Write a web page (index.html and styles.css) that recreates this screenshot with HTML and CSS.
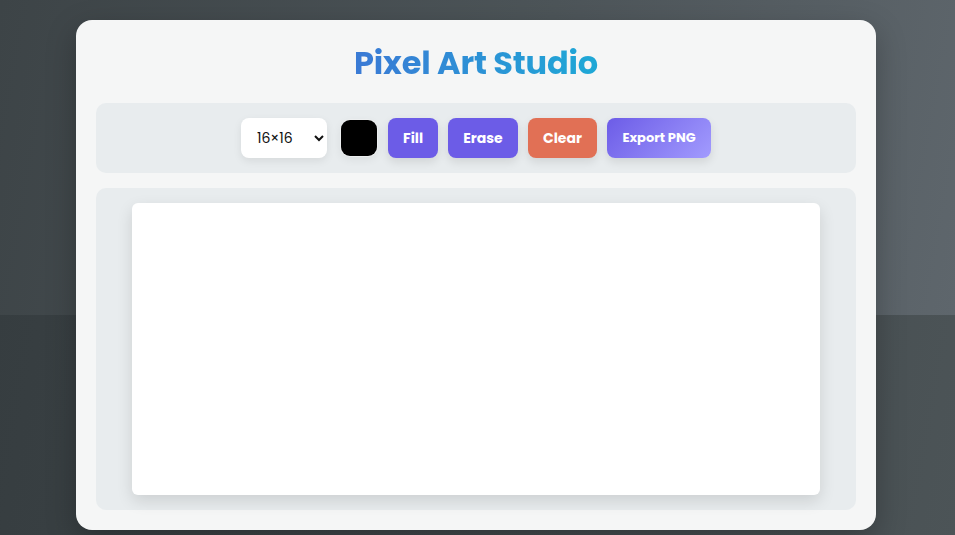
FILE: index.html
```html
<!DOCTYPE html>
<html lang="en">
<head>
<meta charset="utf-8">
<title>Pixel Art Studio</title>
<link rel="stylesheet" href="styles.css">
</head>
<body>
<main class="card">
  <h1 class="title">Pixel Art Studio</h1>
  <div class="toolbar">
    <select class="size-select">
      <option>16×16</option>
      <option>32×32</option>
      <option>64×64</option>
    </select>
    <input class="color-input" type="color" value="#000000">
    <button class="btn btn-fill">Fill</button>
    <button class="btn btn-erase">Erase</button>
    <button class="btn btn-clear">Clear</button>
    <button class="btn btn-export">Export PNG</button>
  </div>
  <div class="canvas-wrap">
    <div class="canvas"></div>
  </div>
</main>
</body>
</html>
```
FILE: styles.css
```css
html {
  background:
    linear-gradient(100deg, #3d4447 0%, #4d5559 55%, #5e666c 100%) top left / 100% 315px no-repeat,
    linear-gradient(100deg, #353c3f 0%, #41484b 55%, #4c5457 100%);
  min-height: 100%;
}
body {
  margin: 0;
  padding: 20px 3px 20px 0;
  font-family: "Poppins", "Open Sans", "Noto Sans", sans-serif;
}
.card {
  width: 800px;
  height: 510px;
  box-sizing: border-box;
  margin: 0 auto;
  padding: 20px;
  background: #f5f6f6;
  border-radius: 16px;
  box-shadow: 0 10px 30px rgba(0, 0, 0, 0.25);
  display: flex;
  flex-direction: column;
}
.title {
  margin: 0 0 20px;
  height: 43px;
  line-height: 45px;
  text-align: center;
  font-size: 32px;
  font-weight: 700;
  letter-spacing: -0.2px;
  background: linear-gradient(90deg, #3a7bd5 35%, #1fa7d6 65%);
  -webkit-background-clip: text;
  background-clip: text;
  color: transparent;
}
.toolbar {
  height: 70px;
  box-sizing: border-box;
  background: #e8ecee;
  border-radius: 10px;
  display: flex;
  align-items: center;
  justify-content: center;
  gap: 10px;
  margin-bottom: 15px;
}
.size-select {
  width: 86px;
  height: 40px;
  padding: 0 6px 0 12px;
  border: none;
  border-radius: 8px;
  background: #ffffff;
  font-family: "Poppins", sans-serif;
  font-size: 14px;
  color: #111;
  box-shadow: 0 3px 8px rgba(0, 0, 0, 0.08);
  margin-right: 3px;
}
.color-input {
  -webkit-appearance: none;
  appearance: none;
  width: 38px;
  height: 38px;
  padding: 1px;
  border: none;
  border-radius: 10px;
  background: #eceeef;
  box-shadow: 0 3px 8px rgba(0, 0, 0, 0.06);
  cursor: pointer;
}
.color-input::-webkit-color-swatch-wrapper {
  padding: 0;
}
.color-input::-webkit-color-swatch {
  border: none;
  border-radius: 9px;
}
.btn {
  height: 40px;
  padding: 0;
  border: none;
  border-radius: 8px;
  color: #ffffff;
  font-family: "Poppins", "Open Sans", sans-serif;
  font-weight: 700;
  font-size: 14px;
  box-shadow: 0 4px 10px rgba(0, 0, 0, 0.1);
  cursor: pointer;
}
.btn-fill { background: #6c5ce7; width: 50px; }
.btn-erase { background: #6c5ce7; width: 70px; }
.btn-clear { background: #e17055; width: 69px; }
.btn-export {
  width: 104px;
  font-size: 13px;
  background: linear-gradient(135deg, #6c5ce7 0%, #a29bfe 100%);
}
.canvas-wrap {
  flex: 1;
  background: #e8ecee;
  border-radius: 10px;
  padding: 15px 0;
  display: flex;
  justify-content: center;
}
.canvas {
  width: 688px;
  height: 292px;
  background: #ffffff;
  border-radius: 6px;
  box-shadow: 0 6px 16px rgba(0, 0, 0, 0.12);
}
```
